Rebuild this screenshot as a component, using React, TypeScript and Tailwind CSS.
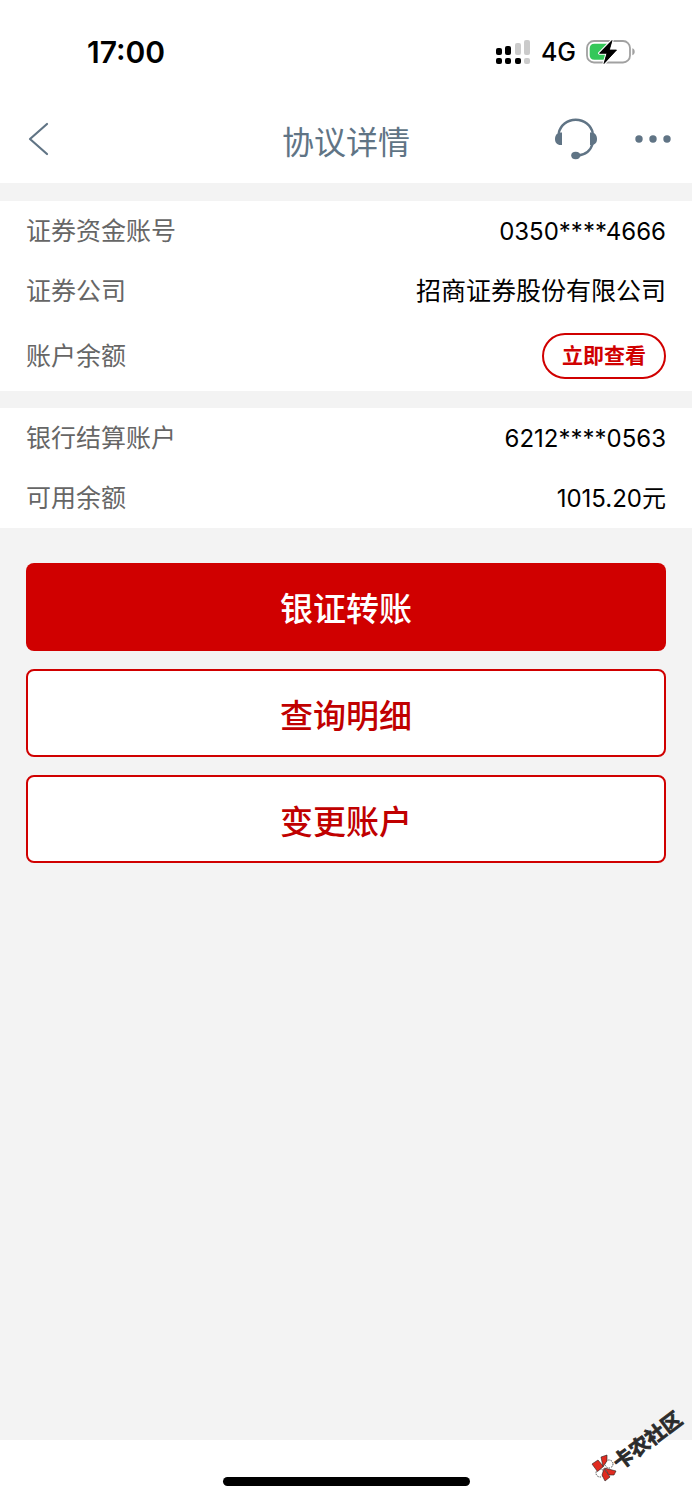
import { ReactNode } from 'react';

interface RowProps {
  label: string;
  children: ReactNode;
}

function SignalIcon() {
  return (
    <svg width="36" height="26" viewBox="0 0 36 26" aria-hidden="true">
      <rect x="1" y="9" width="6" height="7" rx="2" fill="#000" />
      <rect x="10" y="7" width="6" height="9" rx="2" fill="#000" />
      <rect x="20" y="4" width="6" height="12" rx="2" fill="#cbcbcb" />
      <rect x="29" y="1" width="6" height="15" rx="2" fill="#cbcbcb" />
      <rect x="1" y="19" width="6" height="6" rx="2" fill="#000" />
      <rect x="10" y="19" width="6" height="6" rx="2" fill="#000" />
      <rect x="20" y="19" width="6" height="6" rx="2" fill="#000" />
      <rect x="29" y="19" width="6" height="6" rx="2" fill="#cbcbcb" />
    </svg>
  );
}

function BatteryIcon() {
  return (
    <svg width="50" height="26" viewBox="0 0 50 26" aria-hidden="true">
      <rect x="1" y="2" width="43" height="21.5" rx="7" fill="none" stroke="#a1a1a1" strokeWidth="1.8" />
      <path d="M46.3 9.2c1.6.6 2.4 1.9 2.4 3.5s-.8 2.9-2.4 3.5z" fill="#a1a1a1" />
      <path d="M8.5 4.7H21V20.8H8.5Q3.7 20.8 3.7 16V9.5Q3.7 4.7 8.5 4.7z" fill="#34c759" />
      <path
        d="M26 1.5L13.5 14.3H21L18 24.500L30.500 11H23.300z"
        fill="#000"
        stroke="#fff"
        strokeWidth="3"
        strokeLinejoin="round"
        paintOrder="stroke"
      />
      <path d="M26 1.500L13.500 14.300H21L18 24.500L30.500 11H23.300z" fill="#000" stroke="#000" strokeWidth="0.8" strokeLinejoin="round" />
    </svg>
  );
}

function HeadsetIcon() {
  return (
    <svg width="44" height="42" viewBox="0 0 44 42" aria-hidden="true">
      <path d="M4.7 15C6.5 7.5 13 1.7 21.7 1.7S37 7.5 38.8 15" fill="none" stroke="#607485" strokeWidth="2.4" />
      <path d="M38.8 25C37 32 31.5 37 23 37.7" fill="none" stroke="#607485" strokeWidth="2.4" />
      <path d="M8 14.5V27H6.5C3 27 1 24.5 1 21s2-6.5 5-6.5z" fill="#607485" />
      <path d="M36 14.5V27H37.5C41 27 43 24.5 43 21s-2-6.5-5-6.5z" fill="#607485" />
      <ellipse cx="21.7" cy="37.5" rx="4.5" ry="3.7" fill="#607485" />
    </svg>
  );
}

function Watermark() {
  return (
    <svg className="absolute right-0 bottom-0" width="112" height="100" viewBox="0 0 112 100" role="img" aria-label="卡农社区">
      <circle cx="29" cy="64" r="4" fill="#fff" stroke="#222" strokeWidth="0.8" strokeDasharray="1.5 1" />
      <circle cx="20" cy="73" r="4" fill="#fff" stroke="#222" strokeWidth="0.8" strokeDasharray="1.5 1" />
      <g fill="#e02b20" stroke="#222" strokeWidth="0.6" strokeLinejoin="round">
        <path d="M12 64l6-4 5.500 6.500-6 5z" />
        <path d="M21 57l6-2v6l-4 5.500z" />
        <path d="M24.500 68l11.500 3-2 4h-5z" />
        <path d="M24 68.500l6 8.500-5 4-3-6z" />
      </g>
      <text
        transform="translate(44 56) rotate(-37)"
        y="9"
        x="-12"
        fontSize="20"
        fontWeight="700"
        fill="#2b2b2b"
        stroke="#2b2b2b"
        strokeWidth="0.8"
        className="font-['Noto_Sans_CJK_SC',sans-serif]"
      >
        卡农社区
      </text>
    </svg>
  );
}

function Row({ label, children }: RowProps) {
  return (
    <div className="flex h-[60px] items-center justify-between last:nth-3:h-[70px]">
      <dt className="pt-0.5 text-[#666]">{label}</dt>
      <dd className="text-black">{children}</dd>
    </div>
  );
}

export default function App() {
  return (
    <div className="relative flex min-h-screen flex-col bg-[#f3f3f3] font-[Inter,'Noto_Sans_CJK_SC',sans-serif]">
      <header className="bg-white">
        <div className="flex h-[103px] items-center justify-between pr-14 pl-[87px]">
          <span className="pt-0.5 text-[30px] font-semibold">17:00</span>
          <div className="flex items-center gap-[10px]">
            <SignalIcon />
            <span className="pt-0.5 text-[25px] font-medium">4G</span>
            <BatteryIcon />
          </div>
        </div>
        <nav className="grid h-20 grid-cols-[1fr_auto_1fr] items-center px-5 pb-2">
          <button type="button" aria-label="返回" className="w-10 pl-2">
            <svg width="22" height="36" viewBox="0 0 22 36" fill="none" stroke="#607485" strokeWidth="2.2" strokeLinecap="round" strokeLinejoin="round">
              <path d="M19 3L2 18l17 15" />
            </svg>
          </button>
          <h1 className="pt-2 text-[32px] text-[#607485]">协议详情</h1>
          <div className="flex items-center justify-end gap-9">
            <button type="button" aria-label="客服">
              <HeadsetIcon />
            </button>
            <button type="button" aria-label="更多">
              <svg width="38" height="8" viewBox="0 0 38 8" fill="#607485">
                <circle cx="5" cy="4" r="3.7" />
                <circle cx="19" cy="4" r="3.7" />
                <circle cx="33" cy="4" r="3.7" />
              </svg>
            </button>
          </div>
        </nav>
      </header>

      <main className="flex-1 text-[25px]">
        <dl className="mt-[18px] bg-white px-[26px]">
          <Row label="证券资金账号">
            <p className="pt-0.5 text-2xl">0350****4666</p>
          </Row>
          <Row label="证券公司">
            <p className="pt-0.5">招商证券股份有限公司</p>
          </Row>
          <Row label="账户余额">
            <button type="button" className="flex h-[46px] items-center rounded-full border-2 border-[#d00000] px-[18px] text-[21px] font-bold text-[#d00000]">
              立即查看
            </button>
          </Row>
        </dl>
        <dl className="mt-[17px] bg-white px-[26px]">
          <Row label="银行结算账户">
            <p className="pt-0.5 text-2xl">6212****0563</p>
          </Row>
          <Row label="可用余额">
            <p className="pt-0.5 text-2xl">1015.20元</p>
          </Row>
        </dl>
        <div className="mt-[35px] flex flex-col gap-[18px] px-[26px] text-[33px] font-medium">
          <button type="button" className="h-[88px] rounded-lg bg-[#d00000] pt-1.5 text-white">银证转账</button>
          <button type="button" className="h-[88px] rounded-lg border-2 border-[#d00000] bg-white pt-2 text-[#c00000]">查询明细</button>
          <button type="button" className="h-[88px] rounded-lg border-2 border-[#d00000] bg-white pt-2 text-[#c00000]">变更账户</button>
        </div>
      </main>

      <footer className="flex h-[60px] justify-center bg-white pt-[37px]">
        <div className="h-[9px] w-[247px] rounded-full bg-black" />
      </footer>
      <Watermark />
    </div>
  );
}
